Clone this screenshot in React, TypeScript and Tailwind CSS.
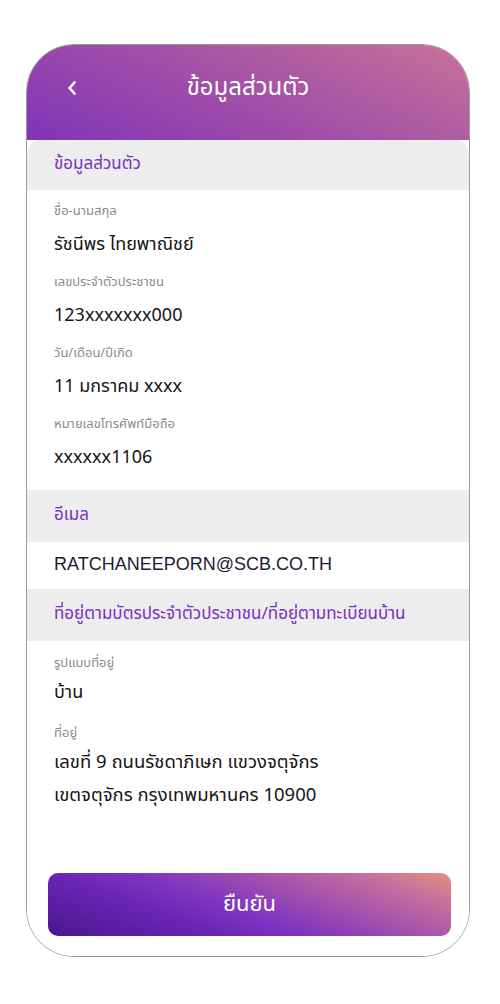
import React from 'react';

const font = { fontFamily: '"Noto Sans Thai", "Noto Sans", "Liberation Sans", sans-serif' };

function SectionHeader({ title, className = '' }: { title: string; className?: string }) {
  return (
    <div className={`bg-[#ededed] pl-[27px] flex items-center text-[17px] text-[#7a2fc0] ${className}`}>
      {title}
    </div>
  );
}

function Field({ label, value }: { label: string; value: string }) {
  return (
    <div className="pb-[15px]">
      <div className="h-[20px] leading-[20px] text-[13px] text-[#8a8a8a]">{label}</div>
      <div className="mt-[12px] h-[24px] leading-[24px] text-[18px] text-[#151515]">{value}</div>
    </div>
  );
}

export default function App() {
  return (
    <div className="w-[500px] h-[1004px] bg-white" style={font}>
      <div className="ml-[26px] mt-[44px] w-[444px] h-[913px] rounded-[48px] border border-[#9a9a9a] overflow-hidden flex flex-col bg-white">
        {/* header */}
        <div className="h-[95px] shrink-0 bg-[linear-gradient(25deg,#7f35b8_0%,#9c4aab_40%,#b4629f_75%,#c8729a_100%)] relative">
          <div className="h-[86px] flex items-center justify-center text-white text-[24px]">ข้อมูลส่วนตัว</div>
          <svg className="absolute left-[39px] top-[35px]" width="12" height="16" viewBox="0 0 12 16" fill="none">
            <path d="M8.5 2.5 L3.5 8 L8.5 13.5" stroke="white" strokeWidth="2.6" strokeLinecap="round" strokeLinejoin="round" />
          </svg>
        </div>

        {/* card */}
        <div className="-mt-[1px] flex-1 flex flex-col bg-white rounded-t-[16px] overflow-hidden">
          <SectionHeader title="ข้อมูลส่วนตัว" className="h-[51px]" />
          <div className="pl-[27px] pt-[11px] pb-[5px]">
            <Field label="ชื่อ-นามสกุล" value="รัชนีพร ไทยพาณิชย์" />
            <Field label="เลขประจำตัวประชาชน" value="123xxxxxxx000" />
            <Field label="วัน/เดือน/ปีเกิด" value="11 มกราคม xxxx" />
            <Field label="หมายเลขโทรศัพท์มือถือ" value="xxxxxx1106" />
          </div>

          <SectionHeader title="อีเมล" className="h-[52px]" />
          <div
            className="h-[47px] pl-[27px] pb-[3px] flex items-center text-[18px] text-[#1c1c34]"
            style={{ fontFamily: '"Liberation Sans", "Noto Sans", sans-serif' }}
          >
            RATCHANEEPORN@SCB.CO.TH
          </div>

          <SectionHeader title="ที่อยู่ตามบัตรประจำตัวประชาชน/ที่อยู่ตามทะเบียนบ้าน" className="h-[52px]" />
          <div className="pl-[27px] pt-[12px]">
            <div className="h-[20px] leading-[20px] text-[13px] text-[#8a8a8a]">รูปแบบที่อยู่</div>
            <div className="mt-[8px] h-[24px] leading-[24px] text-[18px] text-[#151515]">บ้าน</div>
            <div className="mt-[18px] h-[20px] leading-[20px] text-[13px] text-[#8a8a8a]">ที่อยู่</div>
            <div className="mt-[3px] leading-[33px] text-[18.5px] text-[#151515]">
              <div>เลขที่ 9 ถนนรัชดาภิเษก แขวงจตุจักร</div>
              <div>เขตจตุจักร กรุงเทพมหานคร 10900</div>
            </div>
          </div>

          <div className="flex-1" />
          <div className="pl-[21px] pr-[18px] pb-[20px]">
            <button className="w-full h-[63px] rounded-[10px] text-white text-[22px] bg-[linear-gradient(20deg,#4a1690_0%,#6a25b5_30%,#7e34c0_45%,#a451ad_65%,#c7719c_85%,#e4917f_100%)]">
              ยืนยัน
            </button>
          </div>
        </div>
      </div>
    </div>
  );
}
